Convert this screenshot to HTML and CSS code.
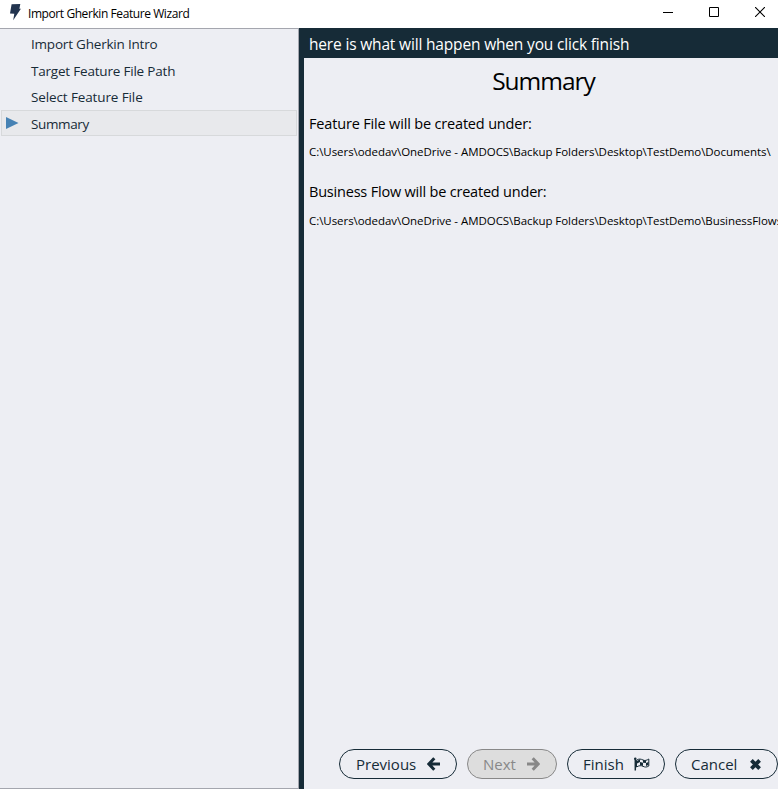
FILE: index.html
```
<!DOCTYPE html>
<html lang="en">
<head>
<meta charset="utf-8">
<title>Import Gherkin Feature Wizard</title>
<link rel="stylesheet" href="styles.css">
</head>
<body>
<div class="window">
  <header class="titlebar">
    <svg class="app-icon" width="14" height="18" viewBox="0 0 14 18"><path d="M3.6 1.2 12.3 1 11.4 5.8H12.9L5.2 17.3 6.3 10.8 2 10.4Z" fill="#22344f"/></svg>
    <span class="title">Import Gherkin Feature Wizard</span>
    <div class="controls">
      <svg width="10" height="10" viewBox="0 0 10 10"><path d="M0 5.5H10" stroke="#000"/></svg>
      <svg width="10" height="10" viewBox="0 0 10 10"><path d="M.5.5H9.5V9.5H.5Z" fill="none" stroke="#000"/></svg>
      <svg width="10" height="10" viewBox="0 0 10 10"><path d="M0 0 10 10M10 0 0 10" stroke="#000" stroke-width="1.1"/></svg>
    </div>
  </header>
  <main class="body">
    <nav class="steps">
      <div class="step"><span>Import Gherkin Intro</span></div>
      <div class="step"><span>Target Feature File Path</span></div>
      <div class="step select"><span>Select Feature File</span></div>
      <div class="step current"><svg class="arrow" width="13" height="12" viewBox="0 0 13 12"><path d="M0 0 12.5 6 0 12Z" fill="#4682b4"/></svg><span>Summary</span></div>
    </nav>
    <section class="page">
      <div class="banner"><span>here is what will happen when you click finish</span></div>
      <div class="content">
        <h1><span>Summary</span></h1>
        <p class="label"><span>Feature File will be created under:</span></p>
        <p class="path"><span>C:\Users\odedav\OneDrive - AMDOCS\Backup Folders\Desktop\TestDemo\Documents\</span></p>
        <p class="label second"><span>Business Flow will be created under:</span></p>
        <p class="path last"><span>C:\Users\odedav\OneDrive - AMDOCS\Backup Folders\Desktop\TestDemo\BusinessFlows</span></p>
      </div>
      <footer class="actions">
        <button class="previous"><span>Previous</span><svg width="13" height="14" viewBox="0 0 13 14"><path d="M7.3 1.2 1.9 7l5.4 5.8M2 7H13" fill="none" stroke="currentColor" stroke-width="3"/></svg></button>
        <button class="next" disabled><span>Next</span><svg width="13" height="14" viewBox="0 0 13 14"><path d="M5.7 1.2 11.1 7l-5.4 5.8M11 7H0" fill="none" stroke="currentColor" stroke-width="3"/></svg></button>
        <button class="finish"><span>Finish</span><svg width="16" height="14" viewBox="0 0 16 14"><path d="M1.3 1V13.5" stroke="currentColor" stroke-width="1.5"/><path d="M2.5 3.2C5 1.5 7 2 9 3S12.7 3.3 14.8 2V9C12.5 10.4 11 10.3 9 9.3S5 8.5 2.5 10Z" fill="none" stroke="currentColor"/><path d="M3 4 6 2.3V5L9 5.7V3L12 3.4V6L14.5 5V8L12 9V6L9 5.7V9L6 8V5L3 6.5Z" fill="currentColor"/><circle cx="1.3" cy="1.8" r="1.2" fill="currentColor"/></svg></button>
        <button class="cancel"><span>Cancel</span><svg width="11" height="11" viewBox="0 0 11 11"><path d="M1.4 1.4 9.6 9.6M9.6 1.4 1.4 9.6" stroke="currentColor" stroke-width="3.8"/></svg></button>
      </footer>
    </section>
  </main>
</div>
</body>
</html>
```
FILE: styles.css
```
* { box-sizing: border-box; }
body { margin: 0; font-family: "Open Sans", "Noto Sans", sans-serif; color: #000; overflow: hidden; }
.window { width: 778px; height: 789px; display: flex; flex-direction: column; background: #fff; overflow: hidden; }
span { white-space: nowrap; }
svg { display: block; flex: none; }

.titlebar { height: 28px; flex: none; display: flex; align-items: flex-start; padding-left: 8px; }
.app-icon { margin-top: 3px; }
.title { margin-left: 6px; font-size: 12px; line-height: 27px; letter-spacing: -.42px; }
.controls { margin-left: auto; display: flex; gap: 36px; padding: 7px 13px 0 0; }

.body { flex: 1; display: flex; min-height: 0; }
.steps { width: 299px; flex: none; background: #edeef3; border: 1px solid #a4a6ae; border-left: 0; padding: 2px 1px 0; }
.step { height: 26.4px; display: flex; align-items: center; padding-left: 30px; font-size: 13.5px; letter-spacing: -.2px; color: #172b37; position: relative; }
.step.select { letter-spacing: -.12px; }
.step.current { height: 26px; background: #e8e9ec; border: 1px solid #d7d9db; padding: 2px 0 0 29px; letter-spacing: -.38px; }
.arrow { position: absolute; left: 4px; top: 6px; }

.page { flex: 1; min-width: 0; display: flex; flex-direction: column; background: #edeef3; border-left: 5px solid #162b37; }
.banner { height: 30px; flex: none; background: #162b37; color: #fff; padding-left: 5px; font-size: 15.5px; line-height: 32px; letter-spacing: -.17px; }
.content { flex: 1; padding-left: 5px; overflow: hidden; }
h1 { margin: 0; text-align: center; font-size: 24.5px; font-weight: 400; line-height: 46px; height: 55px; letter-spacing: -1px; }
p { margin: 0; }
.label { font-size: 14.5px; line-height: 22px; letter-spacing: -.17px; }
.path { font-size: 11.5px; line-height: 20px; margin-top: 7px; letter-spacing: -.05px; }
.label.second { margin-top: 19px; letter-spacing: -.2px; }
.path.last { margin-top: 8px; }

.actions { height: 40px; flex: none; display: flex; gap: 10px; padding-left: 35px; }
button { height: 30px; flex: none; display: flex; align-items: center; justify-content: space-between; padding: 0 16px; border: 1px solid #162b37; border-radius: 15px; background: transparent; color: #162b37; font: 15px/20px "Open Sans", sans-serif; }
.previous { width: 118px; }
.next { width: 90px; background: #dddddd; border-color: #888; color: #888; padding-left: 15px; }
.finish { width: 98px; padding: 0 14px 0 15px; }
.cancel { width: 103px; padding-left: 15px; }
```
